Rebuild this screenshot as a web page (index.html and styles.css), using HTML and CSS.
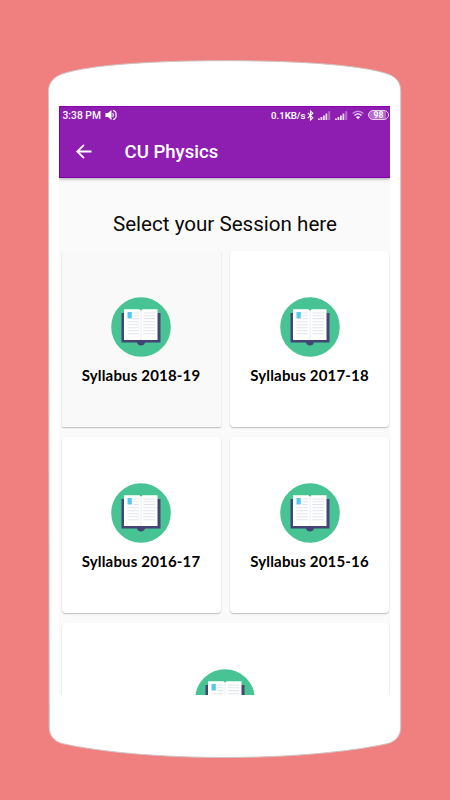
FILE: index.html
```html
<!DOCTYPE html>
<html lang="en">
<head>
<meta charset="utf-8">
<title>CU Physics</title>
<link rel="stylesheet" href="styles.css">
</head>
<body>
<svg class="phone" viewBox="0 0 450 800" aria-hidden="true">
  <path d="M48.500 90C49 82 54 77 62 74C92 64 160 60.700 225 60.700C290 60.700 358 64 388 74C396 77 400.200 82 400.700 90V728C400.200 736 396 741 388 743.500C350 752 290 757.500 225 757.500C160 757.500 100 752 62 743.500C54 741 49.700 736 49.200 728Z"/>
</svg>
<svg class="defs" aria-hidden="true">
  <symbol id="book" viewBox="0 0 60 60">
    <circle cx="30" cy="30" r="29.800" fill="#48c393"/>
    <path fill="#444476" d="M10.500 16H49.500V45.500H34C33.500 47.500 32 48.500 30 48.500S26.500 47.500 26 45.500H10.500Z"/>
    <path fill="#fff" d="M13 12.300H28.500L30 13.800L31.500 12.300H46.500V43H13Z"/>
    <path fill="#f3f4f8" d="M29.300 14H30.700V43H29.300Z"/>
    <path fill="#55c9f2" d="M16.500 15H20.800V21.500H16.500Z"/>
    <path stroke="#e2e5ec" stroke-width="1.100" d="M22.500 16H28M22.500 18.800H28M22.500 21.600H28M16.500 24.800H28M16.500 27.800H28M16.500 30.800H28M16.500 33.800H28M16.500 36.800H28M32.500 16H44M32.500 18.800H44M32.500 21.600H44M32.500 24.800H44M32.500 27.800H44M32.500 30.800H44M32.500 33.800H44M32.500 36.800H44"/>
  </symbol>
  <symbol id="signal" viewBox="0 0 13 9">
    <path fill="#f3dff7" d="M0 7.500H1.800V9H0ZM2.500 6H4.300V9H2.500ZM5 4.500H6.800V9H5ZM7.500 2.500H9.300V9H7.500Z"/>
    <path fill="#b66bcb" d="M10.200 .2H12.200V9H10.200Z"/>
  </symbol>
</svg>
<main class="screen">
  <header class="top">
    <div class="status">
      <span class="time">3:38 PM</span>
      <svg class="sound" viewBox="0 0 12 12"><path fill="#fff" d="M.5 4H3L6.500 1V11L3 8H.5Z"/><path fill="none" stroke="#fff" stroke-width="1.200" d="M7.700 4Q9.200 6 7.700 8M8 1.400C12.200 2.500 12.200 9.500 8 10.600"/></svg>
      <span class="speed">0.1KB/s</span>
      <svg class="bt" viewBox="0 0 7 11"><path fill="none" stroke="#fff" stroke-width="1.100" d="M.8 3L5.800 7.800L3.500 10V1L5.800 3.200L.8 8"/></svg>
      <svg class="sig"><use href="#signal"/></svg>
      <svg class="sig"><use href="#signal"/></svg>
      <svg class="wifi" viewBox="0 0 12 10"><g fill="none" stroke-width="1.300"><path stroke="#c992d9" d="M.6 3.600Q6-1.200 11.400 3.600"/><path stroke="#fff" d="M2.500 5.500Q6 2.300 9.500 5.500"/></g><path fill="#fff" d="M3.900 7Q6 5.300 8.100 7L6 9.300Z"/></svg>
      <span class="battery">98</span>
    </div>
    <div class="bar">
      <svg class="back" viewBox="0 0 16 16"><path fill="none" stroke="#fff" stroke-width="1.800" d="M15.500 7.500H1.500M8 .8L1.300 7.500L8 14.200"/></svg>
      <h1>CU Physics</h1>
    </div>
  </header>
  <h2>Select your Session here</h2>
  <section class="grid">
    <article class="card pressed"><svg class="book"><use href="#book"/></svg><p>Syllabus 2018-19</p></article>
    <article class="card"><svg class="book"><use href="#book"/></svg><p>Syllabus 2017-18</p></article>
    <article class="card"><svg class="book"><use href="#book"/></svg><p>Syllabus 2016-17</p></article>
    <article class="card"><svg class="book"><use href="#book"/></svg><p>Syllabus 2015-16</p></article>
    <article class="card wide"><svg class="book"><use href="#book"/></svg></article>
  </section>
</main>
</body>
</html>
```

FILE: styles.css
```css
* { box-sizing: border-box; }
body {
  margin: 0;
  width: 450px;
  height: 800px;
  padding: 106px 60px 0 59px;
  overflow: hidden;
  background: #f08080;
  font-family: Roboto, sans-serif;
  position: relative;
}
svg { display: block; flex: none; }
.phone { position: absolute; inset: 0; width: 450px; height: 800px; fill: #fff; stroke: #cfc4c2; stroke-width: 1; }
.defs { position: absolute; width: 0; height: 0; }
.screen { position: relative; width: 330.500px; height: 589px; overflow: hidden; background: #fafafa; }
.top { height: 71.500px; background: #8e1eb1; border: 1px solid #8500a8; border-right: 0; box-shadow: 0 1px 3px rgba(0,0,0,.35); color: #fff; }
.status { display: flex; align-items: center; height: 16px; padding-left: 2.500px; font-size: 10.300px; font-weight: 500; }
.time { width: 38px; white-space: nowrap; }
.sound { width: 12px; height: 12px; margin-left: 4.500px; }
.speed { width: 34px; margin-left: 154px; font-size: 9.600px; font-weight: 600; white-space: nowrap; }
.bt { width: 7px; height: 11px; margin-left: 2px; }
.sig { width: 13px; height: 9px; margin-left: 4px; }
.wifi { width: 12px; height: 10px; margin-left: 4px; }
.battery { width: 21px; height: 10px; margin-left: 4px; border: 1px solid #ead0f0; border-radius: 5px; background: linear-gradient(90deg, #b66bcb 90%, #8e1eb1 90%); font-size: 8.500px; line-height: 8px; text-align: center; font-weight: 700; }
.bar { display: flex; align-items: center; height: 56px; padding: 1px 0 0 16px; }
.back { width: 16px; height: 16px; }
h1 { margin: 0 0 0 32.500px; font-size: 18.600px; line-height: 24px; font-weight: 500; white-space: nowrap; }
h2 { margin: 34.500px 0 0 1.500px; height: 39px; font-size: 20.600px; line-height: 25px; font-weight: 400; text-align: center; color: #0a0a0a; white-space: nowrap; }
.grid { display: grid; grid-template-columns: 159px 159px; grid-auto-rows: 176px; column-gap: 9.500px; row-gap: 10px; padding-left: 2.500px; }
.card { display: flex; flex-direction: column; align-items: center; padding-top: 46px; background: #fff; border-radius: 4px; box-shadow: 0 1px 1.500px rgba(0,0,0,.25); }
.pressed { background: #f9f9f9; border-radius: 1px; }
.wide { grid-column: 1 / 3; }
.book { width: 60px; height: 60px; }
.card p { margin: 8px 0 0; font: 700 15px/20px Lato, sans-serif; color: #000; white-space: nowrap; letter-spacing: .17px; }
```
